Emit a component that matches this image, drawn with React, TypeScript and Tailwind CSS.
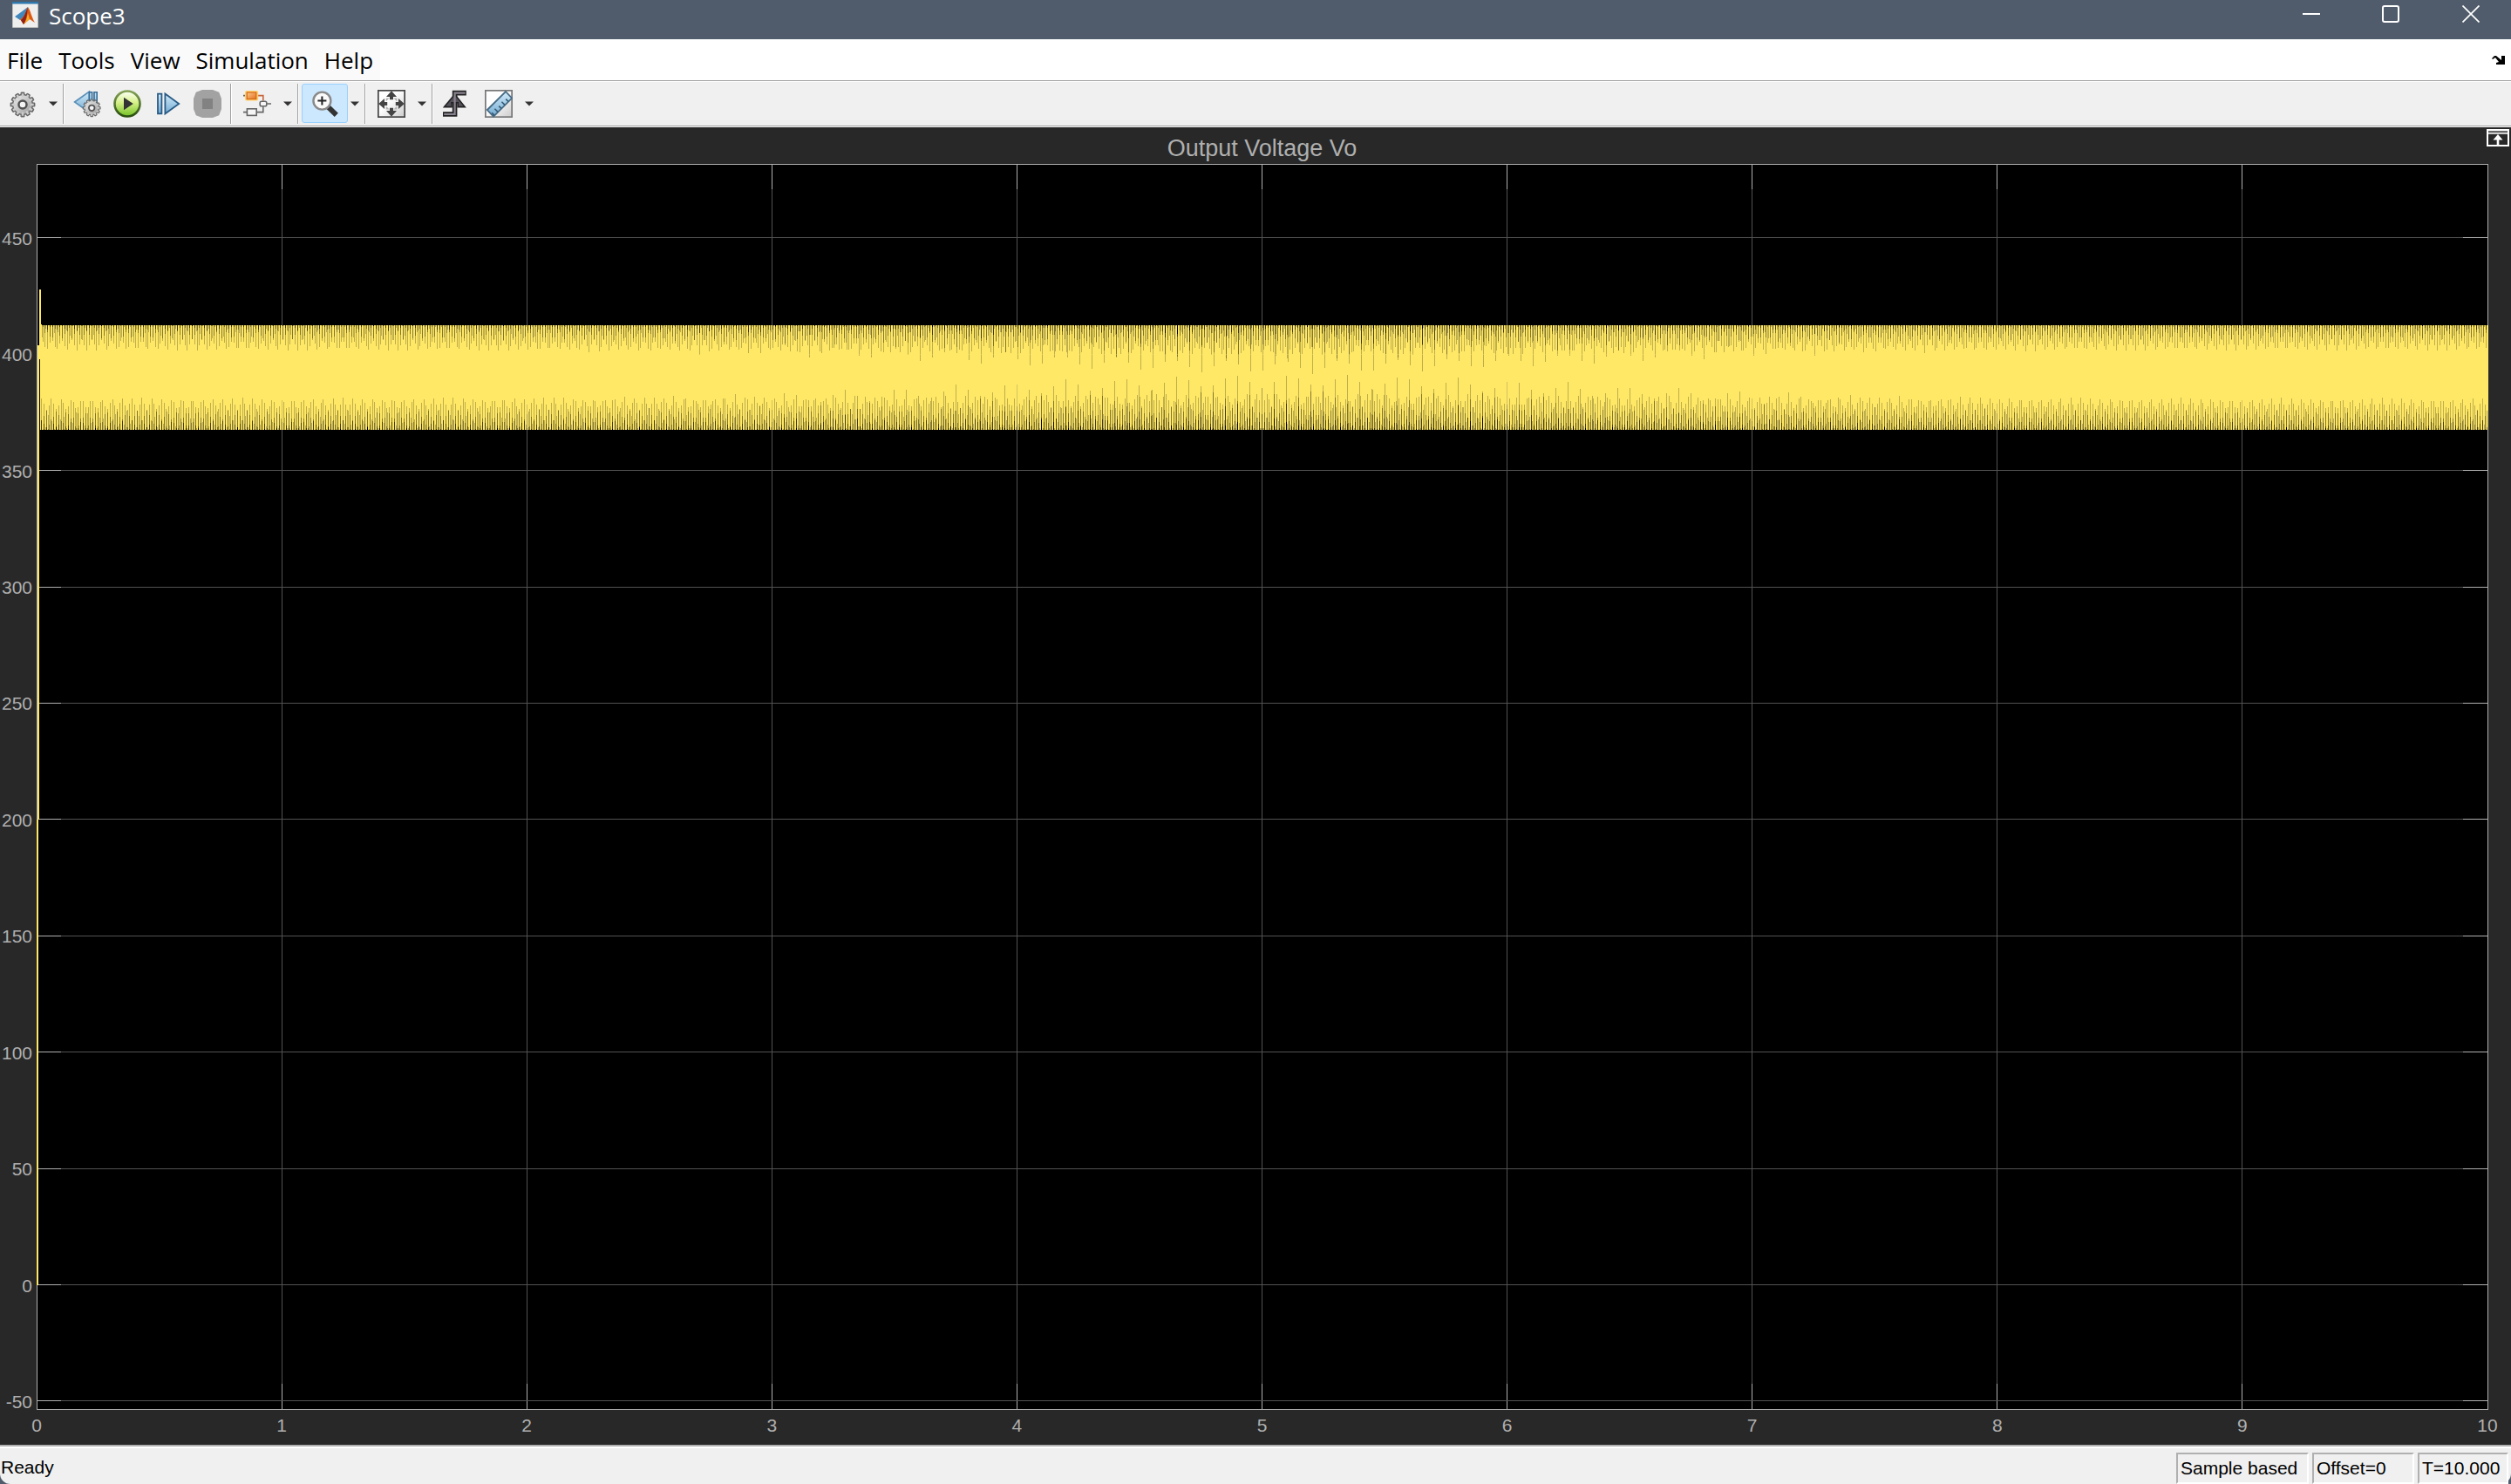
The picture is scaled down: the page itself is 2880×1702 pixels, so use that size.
import type { ReactNode } from "react";

const xTicks = [0, 1, 2, 3, 4, 5, 6, 7, 8, 9, 10];
const yTicks = [450, 400, 350, 300, 250, 200, 150, 100, 50, 0, -50];
const Y_MAX = 481.8;
const Y_MIN = -53.4;
const yPercent = (v: number) => `${((Y_MAX - v) / (Y_MAX - Y_MIN)) * 100}%`;
const xPercent = (v: number) => `${v * 10}%`;

const COLUMNS = 2811;
const ROWS = 1428;
const CYCLES = 1000;
const SAMPLES = 4;

const row = (v: number) => Math.round(((Y_MAX - v) / (Y_MAX - Y_MIN)) * ROWS);

function crest(x: number, pen: number, shift: number, gap: number) {
  const period = COLUMNS / CYCLES;
  const cycle = x / period + shift;
  const phase = cycle - Math.floor(cycle);
  const thin = gap * (Math.floor(cycle) % 5 === 0 ? 0.42 : 0.08);
  const distance = Math.min(phase, 1 - phase) * period;
  const reach = Math.max(0, distance - (pen - thin) / 2);
  return Math.cos((reach / period) * 2 * Math.PI);
}

/* Paths of one-column bars, one path for each level of coverage. */
function rippleLayers() {
  const layers: string[][] = Array.from({ length: SAMPLES }, () => []);
  const bar = (level: number, x: number, from: number, to: number) => {
    if (to > from) layers[level].push(`M${x} ${from}h1V${to}h-1z`);
  };
  for (let x = 4; x < COLUMNS + 1; x++) {
    const t = (x / COLUMNS) * 10;
    const gap = Math.exp(-(((t - 5.1) / 1.8) ** 2));
    const tops: number[] = [];
    const bottoms: number[] = [];
    for (let s = 0; s < SAMPLES; s++) {
      const sx = x + (s + 0.5) / SAMPLES;
      tops.push(row(390 + 22.6 * crest(sx, 1.88, 0, gap)));
      bottoms.push(row(390 - 22.6 * crest(sx, 1.76, 0.5, gap)));
    }
    tops.sort((a, b) => a - b);
    bottoms.sort((a, b) => b - a);
    for (let s = 0; s < SAMPLES - 1; s++) {
      bar(s, x, tops[s], tops[s + 1]);
      bar(s, x, bottoms[s + 1], bottoms[s]);
    }
    bar(SAMPLES - 1, x, tops[SAMPLES - 1], bottoms[SAMPLES - 1]);
  }
  const full = layers[SAMPLES - 1];
  full.push(`M0 ${row(0)}V${row(200)}h1V${row(404)}h2V${row(200)}h-1V${row(0)}z`);
  full.push(`M3 ${row(428)}h2V${row(413)}h1V${row(398)}h-3z`);
  return layers.map((l) => l.join(""));
}
const layers = rippleLayers();

function Tool({ label, children, active = false, menu = false }: { label: string; children: ReactNode; active?: boolean; menu?: boolean }) {
  return (
    <div className="flex items-center">
      <button
        type="button"
        aria-label={label}
        className={
          active
            ? "flex h-[45px] w-[53px] items-center justify-center rounded-[3px] border border-[#99d1ff] bg-[#cce8ff]"
            : "flex h-[45px] w-[46px] items-center justify-center"
        }
      >
        <svg viewBox="0 0 16 16" className="size-8">{children}</svg>
      </button>
      {menu && (
        <button
          type="button"
          aria-label={`${label} options`}
          className={active ? "flex h-[45px] w-4 items-center justify-center" : "flex h-[45px] w-[23px] items-center justify-center"}
        >
          <svg viewBox="0 0 10 6" className="h-[6px] w-[10px]"><path d="M0 0.5H10L5 5.5Z" fill="#333" /></svg>
        </button>
      )}
    </div>
  );
}

function Divider() {
  return <div className="h-[46px] w-[2px] border-l border-[#a0a0a0] bg-white" />;
}

const gearTeeth = Array.from({ length: 12 }, (_, i) => i * 30);

function Gear({ cx, cy, r }: { cx: number; cy: number; r: number }) {
  return (
    <g transform={`translate(${cx} ${cy}) scale(${r / 7})`}>
      {gearTeeth.map((a) => (
        <rect key={a} x="-1.2" y="-7" width="2.4" height="3" rx="0.6" transform={`rotate(${a})`} fill="#666" />
      ))}
      <circle r="5.9" fill="#666" />
      <circle r="5.2" fill="url(#metal)" />
      {gearTeeth.map((a) => (
        <rect key={a} x="-0.6" y="-6.2" width="1.2" height="2" transform={`rotate(${a})`} fill="#ccc" />
      ))}
      <circle r="2.8" fill="#505050" />
      <circle r="1.6" fill="#f4f4f4" />
    </g>
  );
}

function Toolbar() {
  return (
    <div role="toolbar" className="flex h-[53px] shrink-0 items-center border-y border-[#a0a0a0] bg-[#f0f0f0] shadow-[inset_0_1px_0_#fff]">
      <svg className="absolute size-0" aria-hidden="true">
        <defs>
          <linearGradient id="metal" x1="0" y1="0" x2="1" y2="1"><stop offset="0" stopColor="#eee" /><stop offset="1" stopColor="#999" /></linearGradient>
          <linearGradient id="blue" x1="0" y1="0" x2="0" y2="1"><stop offset="0" stopColor="#d2ebfa" /><stop offset="1" stopColor="#73abd2" /></linearGradient>
          <linearGradient id="green" x1="0" y1="0" x2="0" y2="1"><stop offset="0" stopColor="#fbfff0" /><stop offset="0.45" stopColor="#d6f088" /><stop offset="1" stopColor="#7ac52c" /></linearGradient>
          <linearGradient id="ring" x1="0" y1="0" x2="0" y2="1"><stop offset="0" stopColor="#86a356" /><stop offset="1" stopColor="#254a0c" /></linearGradient>
          <linearGradient id="orange" x1="0" y1="0" x2="1" y2="1"><stop offset="0" stopColor="#ffc98c" /><stop offset="1" stopColor="#e0701c" /></linearGradient>
          <linearGradient id="page" x1="0" y1="0" x2="1" y2="1"><stop offset="0.4" stopColor="#fff" /><stop offset="1" stopColor="#ccc" /></linearGradient>
        </defs>
      </svg>
      <div className="flex items-center pl-[3px]">
        <Tool label="Configuration" menu><Gear cx={8} cy={8.5} r={7.2} /></Tool>
      </div>
      <Divider />
      <div className="flex items-center pl-[3px] pr-[3px]">
        <Tool label="Step back">
          <path d="M0.8 7L9.2 1V13Z" fill="url(#blue)" stroke="#5a8fb8" strokeWidth="0.8" />
          <path d="M9.2 1.4h1.6v9H9.2zM12 1.4h1.6v8H12z" fill="url(#blue)" stroke="#376c96" strokeWidth="0.8" />
          <Gear cx={10.6} cy={10.4} r={5.2} />
        </Tool>
        <Tool label="Run">
          <circle cx="8" cy="8" r="7.9" fill="url(#ring)" />
          <circle cx="8" cy="8" r="6.6" fill="url(#green)" />
          <path d="M6 4.4L11.4 8L6 11.6Z" fill="#333" />
        </Tool>
        <Tool label="Step forward">
          <path d="M2.5 2.3h2.2v11.4H2.5z" fill="url(#blue)" stroke="#285a85" strokeWidth="0.9" />
          <path d="M6.7 2.3L14.6 8L6.7 13.7Z" fill="url(#blue)" stroke="#285a85" strokeWidth="0.9" />
        </Tool>
        <Tool label="Stop">
          <path d="M5 0h6l3.6 1.4L16 5v6l-1.4 3.6L11 16H5l-3.6-1.4L0 11V5l1.4-3.6Z" fill="#a2a2a2" />
          <path d="M5 5h6v6H5z" fill="#828282" />
        </Tool>
      </div>
      <Divider />
      <div className="flex items-center pl-[6px]">
        <Tool label="Highlight block" menu>
          <path d="M0 3.3H2M0 12.8h2M8 12.8h3.4V9.6M13.6 8H16" fill="none" stroke="#666" strokeWidth="0.8" />
          <path d="M8 3.3h3.4v3" fill="none" stroke="#c8643c" strokeWidth="0.8" />
          <rect x="1" y="0.5" width="7.6" height="5.8" rx="1" fill="#ffcf6b" />
          <rect x="2.1" y="1.5" width="5.3" height="3.8" fill="url(#orange)" stroke="#d36518" strokeWidth="0.6" />
          <rect x="2.2" y="10.9" width="5.4" height="3.8" fill="#f6f6f6" stroke="#666" strokeWidth="0.8" />
          <rect x="9.6" y="6.6" width="3.8" height="2.8" rx="0.9" fill="#f6f6f6" stroke="#666" strokeWidth="0.8" />
        </Tool>
      </div>
      <Divider />
      <div className="flex items-center px-[3px]">
        <Tool label="Zoom" active menu>
          <path d="M9.4 9.6L14.4 14.4" stroke="#333" strokeWidth="3" />
          <circle cx="6.2" cy="6.3" r="5" fill="#fafafa" stroke="#8a8a8a" strokeWidth="1.2" />
          <path d="M3.7 6.3H8.7M6.2 3.8V8.8" stroke="#222" strokeWidth="1" />
        </Tool>
      </div>
      <Divider />
      <div className="flex items-center pl-[6px]">
        <Tool label="Scale axes" menu>
          <rect x="0.4" y="0.4" width="15.2" height="15.2" fill="url(#page)" stroke="#444" strokeWidth="0.9" />
          <path d="M8 0.6L11 4H9V5.6H7V4H5ZM8 15.4L11 12H9V10.4H7V12H5ZM0.6 8L4 5V7H5.6V9H4V11ZM15.4 8L12 5V7H10.4V9H12V11Z" fill="#444" />
          <path d="M4.8 4.8h2l-2 2zM11.2 4.8v2l-2-2zM4.8 11.2v-2l2 2zM11.2 11.2h-2l2-2z" fill="#b5b5b5" />
        </Tool>
      </div>
      <Divider />
      <div className="flex items-center gap-1 pl-[2px]">
        <Tool label="Triggers">
          <path d="M1 14h6.8V1.8H14.4" fill="none" stroke="#222" strokeWidth="2.8" />
          <path d="M1.8 9.8L7.8 2.6L13.6 9.8H9.6V7.4H6V9.8Z" fill="#55515a" stroke="#222" strokeWidth="0.8" />
          <path d="M1.6 14h6.2V1.8h6" fill="none" stroke="#89828f" strokeWidth="1.1" />
        </Tool>
        <Tool label="Measurements" menu>
          <rect x="0.4" y="0.4" width="15.2" height="15.2" fill="url(#page)" stroke="#777" strokeWidth="0.9" />
          <path d="M1.4 11.5L12 1L15.6 4.8L5 15.3Z" fill="url(#blue)" stroke="#476c86" strokeWidth="0.9" />
          <path d="M5.5 14.7L4.1 13.1M7.5 12.7L5.7 10.9M9.5 10.7L8.1 9.3M11.5 8.7L9.7 6.9M13.5 6.7L12.1 5.3" stroke="#355a75" strokeWidth="0.8" />
        </Tool>
      </div>
    </div>
  );
}

function Chart() {
  return (
    <main className="grid min-h-0 flex-1 grid-cols-[42px_minmax(0,1fr)_27px] grid-rows-[43px_minmax(0,1fr)_41px] bg-[#282828] font-['Liberation_Sans',Arial,sans-serif] text-[#afafaf] shadow-[inset_0_1px_0_#fff]">
      <h1 className="col-start-2 self-end text-center text-[27px] leading-9">Output Voltage Vo</h1>
      <button type="button" aria-label="Maximize axes" className="-ml-px mt-[3px] h-5 w-[26px]">
        <svg viewBox="0 0 26 20" className="h-5 w-[26px]">
          <rect x="1" y="1" width="24" height="18" fill="#282828" stroke="#fff" strokeWidth="2" />
          <path d="M2 2h22v2H2z" fill="#666" />
          <path d="M2 4h22v2H2z" fill="#ccc" />
          <path d="M13 6L18.5 12.5H14.3V18H11.7V12.5H7.5Z" fill="#fff" />
        </svg>
      </button>
      <svg className="col-start-2 row-start-2 h-full w-full overflow-visible" role="img" aria-label="Output voltage over time">
        <rect width="100%" height="100%" fill="#000" />
        {xTicks.slice(1, -1).map((t) => (
          <g key={t} shapeRendering="crispEdges">
            <line x1={xPercent(t)} x2={xPercent(t)} y1="0" y2="100%" stroke="#525252" />
            <line x1={xPercent(t)} x2={xPercent(t)} y1="0" y2="2%" stroke="#afafaf" />
            <line x1={xPercent(t)} x2={xPercent(t)} y1="98%" y2="100%" stroke="#afafaf" />
          </g>
        ))}
        {yTicks.map((v) => (
          <g key={v} shapeRendering="crispEdges">
            <line x1="0" x2="100%" y1={yPercent(v)} y2={yPercent(v)} stroke="#525252" />
            <line x1="0" x2="1%" y1={yPercent(v)} y2={yPercent(v)} stroke="#afafaf" />
            <line x1="99%" x2="100%" y1={yPercent(v)} y2={yPercent(v)} stroke="#afafaf" />
          </g>
        ))}
        <rect width="100%" height="100%" fill="none" stroke="#afafaf" shapeRendering="crispEdges" />
        <svg width="100%" height="100%" viewBox={`0 0 ${COLUMNS} ${ROWS}`} preserveAspectRatio="none" overflow="visible">
          {layers.map((d, i) => (
            <path key={i} d={d} fill="#ffe866" fillOpacity={(i + 1) / SAMPLES} shapeRendering="crispEdges" />
          ))}
        </svg>
        {yTicks.map((v) => (
          <text key={v} x="-5" y={yPercent(v)} dy="8" textAnchor="end" fontSize="21" fill="#afafaf">{v}</text>
        ))}
        {xTicks.map((t) => (
          <text key={t} x={xPercent(t)} y="100%" dy="26" textAnchor="middle" fontSize="21" fill="#afafaf">{t}</text>
        ))}
      </svg>
    </main>
  );
}

export default function App() {
  return (
    <div className="flex h-screen flex-col overflow-hidden bg-[#505c6b] font-['Open_Sans','Noto_Sans',sans-serif] text-black">
      <header className="flex h-[45px] shrink-0 items-start justify-between text-white">
        <div className="flex items-start gap-3 pl-[14px]">
          <svg viewBox="0 0 30 30" className="mt-[2px] h-[30px] w-[30px]">
            <rect width="30" height="30" fill="#eee" stroke="#888" />
            <path d="M0 0h30v2.5H0z" fill="#2f78ad" />
            <path d="M3 17L10 12L18 6L13 18L9 21Z" fill="#4188bd" />
            <path d="M18 6C21 10 22 17 26 24L20 20L13 26L9 20C13 19 16 11 18 6Z" fill="#dc5a16" />
            <path d="M18 6C17 13 17 20 13 26L10 21C14 18 15 12 18 6Z" fill="#8e221a" />
            <path d="M18 13L20 20L13 26C16 22 17 18 18 13Z" fill="#f6ac24" />
          </svg>
          <span className="text-[26px] leading-9">Scope3</span>
        </div>
        <div className="flex">
          <button type="button" aria-label="Minimize" className="flex h-8 w-[91px] items-center justify-center"><svg viewBox="0 0 20 20" className="size-5"><path d="M0 10H20" stroke="#fff" strokeWidth="2" /></svg></button>
          <button type="button" aria-label="Maximize" className="flex h-8 w-[91px] items-center justify-center"><svg viewBox="0 0 20 20" className="size-5"><rect x="1" y="1" width="18" height="18" rx="2" fill="none" stroke="#fff" strokeWidth="2" /></svg></button>
          <button type="button" aria-label="Close" className="flex h-8 w-[93px] items-center justify-center"><svg viewBox="0 0 20 20" className="size-5"><path d="M0.5 0.5L19.5 19.5M19.5 0.5L0.5 19.5" stroke="#fff" strokeWidth="1.7" /></svg></button>
        </div>
      </header>
      <nav className="flex h-[47px] shrink-0 items-center justify-between bg-white text-[26px] leading-9">
        <div className="flex h-full items-center gap-[18px] bg-[#fafafa] px-2">
          <button type="button">File</button>
          <button type="button">Tools</button>
          <button type="button">View</button>
          <button type="button">Simulation</button>
          <button type="button">Help</button>
        </div>
        <button type="button" aria-label="Dock window" className="mr-[6px]">
          <svg viewBox="0 0 16 12" className="h-3 w-4"><path d="M0 4L3 1H5L11 6V1H15V11H5V9L8 8L4 3L1 5Z" fill="#000" /></svg>
        </button>
      </nav>
      <Toolbar />
      <Chart />
      <footer className="flex h-[45px] shrink-0 items-end justify-between rounded-b-[12px] border-t-2 border-[#b0b0b0] bg-[#f0f0f0] font-['Liberation_Sans',Arial,sans-serif] text-[21px] leading-8 shadow-[inset_0_2px_0_#fff]">
        <span className="pb-[3px] pl-[1px]">Ready</span>
        <div className="flex gap-1 pr-[3px]">
          <span className="w-[152px] border-2 border-b-white border-l-[#b0b0b0] border-r-white border-t-[#b0b0b0] pl-[3px]">Sample based</span>
          <span className="w-[117px] border-2 border-b-white border-l-[#b0b0b0] border-r-white border-t-[#b0b0b0] pl-[3px]">Offset=0</span>
          <span className="w-[104px] border-2 border-b-white border-l-[#b0b0b0] border-r-white border-t-[#b0b0b0] pl-[3px]">T=10.000</span>
        </div>
      </footer>
    </div>
  );
}
